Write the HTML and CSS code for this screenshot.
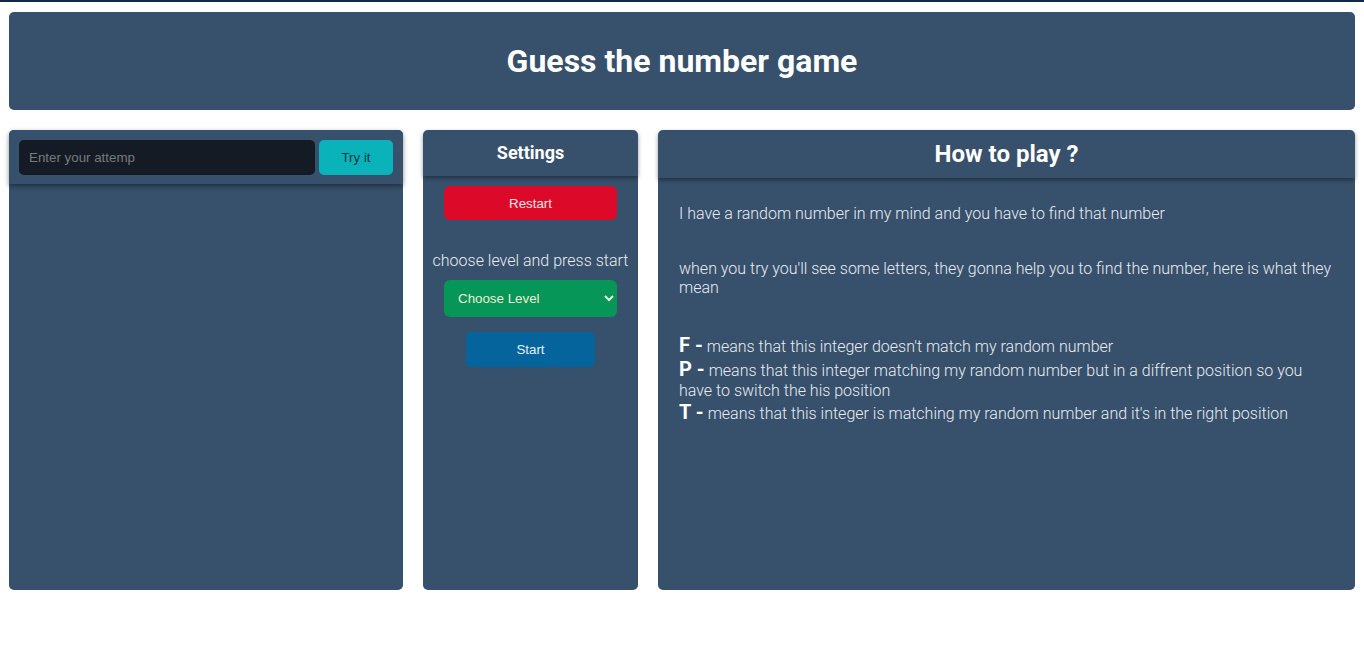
FILE: index.html
```html
<!DOCTYPE html>
<html lang="en">
<head>
<meta charset="utf-8">
<title>Guess the number game</title>
<link rel="stylesheet" href="styles.css">
</head>
<body>
<div class="topline"></div>
<div class="page">
  <header class="banner">
    <h1 class="banner-title">Guess the number game</h1>
  </header>
  <main class="board">
    <section class="panel attempts">
      <div class="attempt-bar">
        <input class="attempt-input" type="text" placeholder="Enter your attemp">
        <button class="btn btn-try">Try it</button>
      </div>
    </section>
    <section class="panel settings">
      <div class="panel-head settings-head">
        <h2 class="settings-title">Settings</h2>
      </div>
      <div class="settings-body">
        <button class="btn btn-restart">Restart</button>
        <p class="settings-hint">choose level and press start</p>
        <select class="level-select">
          <option>Choose Level</option>
          <option>Easy</option>
          <option>Medium</option>
          <option>Hard</option>
        </select>
        <button class="btn btn-start">Start</button>
      </div>
    </section>
    <section class="panel howto">
      <div class="panel-head howto-head">
        <h2 class="howto-title">How to play ?</h2>
      </div>
      <div class="howto-body">
        <p class="howto-p howto-p1">I have a random number in my mind and you have to find that number</p>
        <p class="howto-p howto-p2">when you try you'll see some letters, they gonna help you to find the number, here is what they mean</p>
        <div class="rule"><span class="rule-key">F -</span> means that this integer doesn't match my random number</div>
        <div class="rule"><span class="rule-key">P -</span> means that this integer matching my random number but in a diffrent position so you have to switch the his position</div>
        <div class="rule"><span class="rule-key">T -</span> means that this integer is matching my random number and it's in the right position</div>
      </div>
    </section>
  </main>
</div>
</body>
</html>
```

FILE: styles.css
```css
* { box-sizing: border-box; }
html, body { margin: 0; padding: 0; background: #ffffff; }
body {
  font-family: Roboto, "Liberation Sans", sans-serif;
  color: #ffffff;
}
.topline {
  height: 2px;
  background: #10294a;
}
.page {
  padding: 10px 9px 0 9px;
}
.banner {
  background: #37506b;
  border-radius: 5px;
  height: 98px;
  display: flex;
  align-items: center;
  justify-content: center;
}
.banner-title {
  margin: 0;
  font-size: 32px;
  font-weight: 700;
  color: #ffffff;
}
.board {
  display: grid;
  grid-template-columns: 394px 215px 1fr;
  gap: 20px;
  margin-top: 20px;
}
.panel {
  background: #37506b;
  border-radius: 5px;
  height: 460px;
}
.attempt-bar {
  display: flex;
  gap: 4px;
  padding: 10px 10px 9px 10px;
  border-radius: 5px 5px 0 0;
  box-shadow: 0 2px 5px rgba(0, 0, 0, 0.45);
  background: #37506b;
}
.attempt-input {
  flex: 1;
  height: 35px;
  background: #141b24;
  border: none;
  border-radius: 5px;
  padding: 0 10px;
  font-family: "Liberation Sans", Arial, sans-serif;
  font-size: 13.33px;
  color: #dddddd;
  outline: none;
}
.attempt-input::placeholder { color: #757a80; }
.btn {
  border: none;
  font-family: "Liberation Sans", Arial, sans-serif;
  font-size: 13.33px;
  cursor: pointer;
}
.btn-try {
  width: 74px;
  height: 35px;
  border-radius: 5px;
  background: #0ab3b9;
  color: #14333d;
}
.panel-head {
  border-radius: 5px 5px 0 0;
  box-shadow: 0 2px 4px rgba(0, 0, 0, 0.4);
  display: flex;
  align-items: center;
  justify-content: center;
  position: relative;
}
.settings-head { height: 46px; padding-bottom: 2px; }
.settings-title {
  margin: 0;
  font-size: 18px;
  font-weight: 700;
}
.settings-body {
  display: flex;
  flex-direction: column;
  align-items: center;
  padding-top: 10px;
}
.btn-restart {
  width: 173px;
  height: 34px;
  border-radius: 6px;
  background: #dc0a28;
  color: #f6e6e8;
}
.settings-hint {
  margin: 31px 0 0 0;
  font-size: 16px;
  font-weight: 300;
  line-height: 19px;
  color: #e8edf2;
}
.level-select {
  margin-top: 10px;
  width: 173px;
  height: 37px;
  border: none;
  border-radius: 6px;
  background: #069657;
  color: #f2ecd4;
  font-family: "Liberation Sans", Arial, sans-serif;
  font-size: 13.33px;
  padding: 0 8px 0 10px;
}
.btn-start {
  margin-top: 15px;
  width: 129px;
  height: 35px;
  border-radius: 5px;
  background: #05649c;
  color: #e8eef4;
}
.howto-head { height: 48px; }
.howto-title {
  margin: 0;
  font-size: 24px;
  font-weight: 700;
}
.howto-body {
  padding: 26px 20px 0 21px;
  font-weight: 300;
  font-size: 16px;
  color: #e8edf2;
}
.howto-p {
  margin: 0;
  line-height: 19px;
}
.howto-p1 { margin-bottom: 36px; }
.howto-p2 { margin-bottom: 36px; }
.rule {
  line-height: normal;
}
.rule-key {
  font-size: 20px;
  font-weight: 700;
  color: #ffffff;
}
```
